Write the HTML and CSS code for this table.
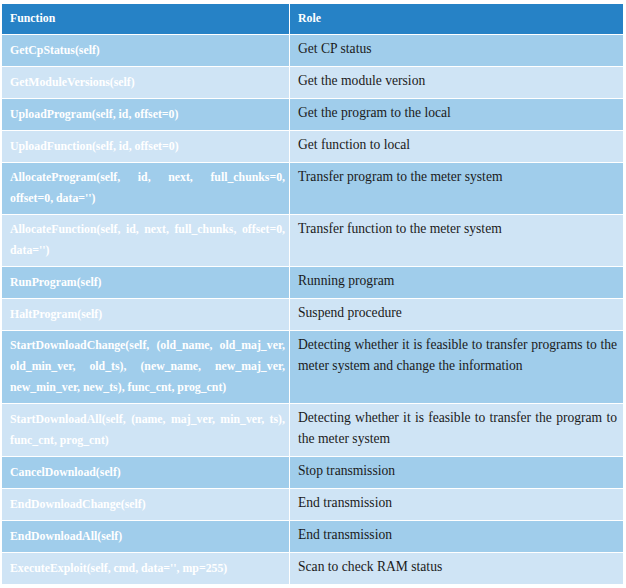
FILE: index.html
```html
<!DOCTYPE html>
<html>
<head>
<meta charset="utf-8">
<link rel="stylesheet" href="styles.css">
</head>
<body>
<div class="wrap">
<table class="api">
  <colgroup><col class="c-fn"><col class="c-role"></colgroup>
  <thead>
    <tr><th class="fn">Function</th><th class="role">Role</th></tr>
  </thead>
  <tbody>
    <tr><td class="fn">GetCpStatus(self)</td><td class="role">Get CP status</td></tr>
    <tr><td class="fn">GetModuleVersions(self)</td><td class="role">Get the module version</td></tr>
    <tr><td class="fn">UploadProgram(self, id, offset=0)</td><td class="role">Get the program to the local</td></tr>
    <tr><td class="fn">UploadFunction(self, id, offset=0)</td><td class="role">Get function to local</td></tr>
    <tr><td class="fn">AllocateProgram(self, id, next, full_chunks=0, offset=0, data='')</td><td class="role">Transfer program to the meter system</td></tr>
    <tr><td class="fn">AllocateFunction(self, id, next, full_chunks, offset=0, data='')</td><td class="role">Transfer function to the meter system</td></tr>
    <tr><td class="fn">RunProgram(self)</td><td class="role">Running program</td></tr>
    <tr><td class="fn">HaltProgram(self)</td><td class="role">Suspend procedure</td></tr>
    <tr><td class="fn">StartDownloadChange(self, (old_name, old_maj_ver, old_min_ver, old_ts), (new_name, new_maj_ver, new_min_ver, new_ts), func_cnt, prog_cnt)</td><td class="role">Detecting whether it is feasible to transfer programs to the meter system and change the information</td></tr>
    <tr><td class="fn">StartDownloadAll(self, (name, maj_ver, min_ver, ts), func_cnt, prog_cnt)</td><td class="role">Detecting whether it is feasible to transfer the program to the meter system</td></tr>
    <tr><td class="fn">CancelDownload(self)</td><td class="role">Stop transmission</td></tr>
    <tr><td class="fn">EndDownloadChange(self)</td><td class="role">End transmission</td></tr>
    <tr><td class="fn">EndDownloadAll(self)</td><td class="role">End transmission</td></tr>
    <tr><td class="fn">ExecuteExploit(self, cmd, data='', mp=255)</td><td class="role">Scan to check RAM status</td></tr>
  </tbody>
</table>
</div>
</body>
</html>
```

FILE: styles.css
```css
html, body {
  margin: 0;
  padding: 0;
  background: #ffffff;
}

.wrap {
  padding: 4px 3px 0 2px;
}

.api {
  width: 621px;
  table-layout: fixed;
  border-collapse: separate;
  border-spacing: 0;
}

.api th,
.api td {
  font-family: "Liberation Serif", "Times New Roman", Times, serif;
}

.c-fn { width: 288px; }
.c-role { width: 333px; }

.api th,
.api td {
  box-sizing: border-box;
  border-bottom: 1px solid #ffffff;
  text-align: justify;
}

.api th.fn,
.api td.fn {
  border-right: 1px solid #ffffff;
}

.api th {
  background: #2682c6;
  color: #ffffff;
  font-size: 11.8px;
  font-weight: bold;
  line-height: 21px;
  height: 31px;
  padding: 4px 8px 5px 8px;
  vertical-align: middle;
}

.api td.fn {
  color: #ffffff;
  font-size: 11.8px;
  font-weight: bold;
  line-height: 21px;
  padding: 4px 4px 5px 8px;
  vertical-align: middle;
}

.api td.role {
  color: #1b1b1b;
  font-size: 13.6px;
  line-height: 21px;
  padding: 3px 6px 7px 8px;
  vertical-align: top;
}

.api tbody tr:nth-child(odd) td {
  background: #a0cdeb;
}

.api tbody tr:nth-child(even) td {
  background: #cfe4f5;
}
```
